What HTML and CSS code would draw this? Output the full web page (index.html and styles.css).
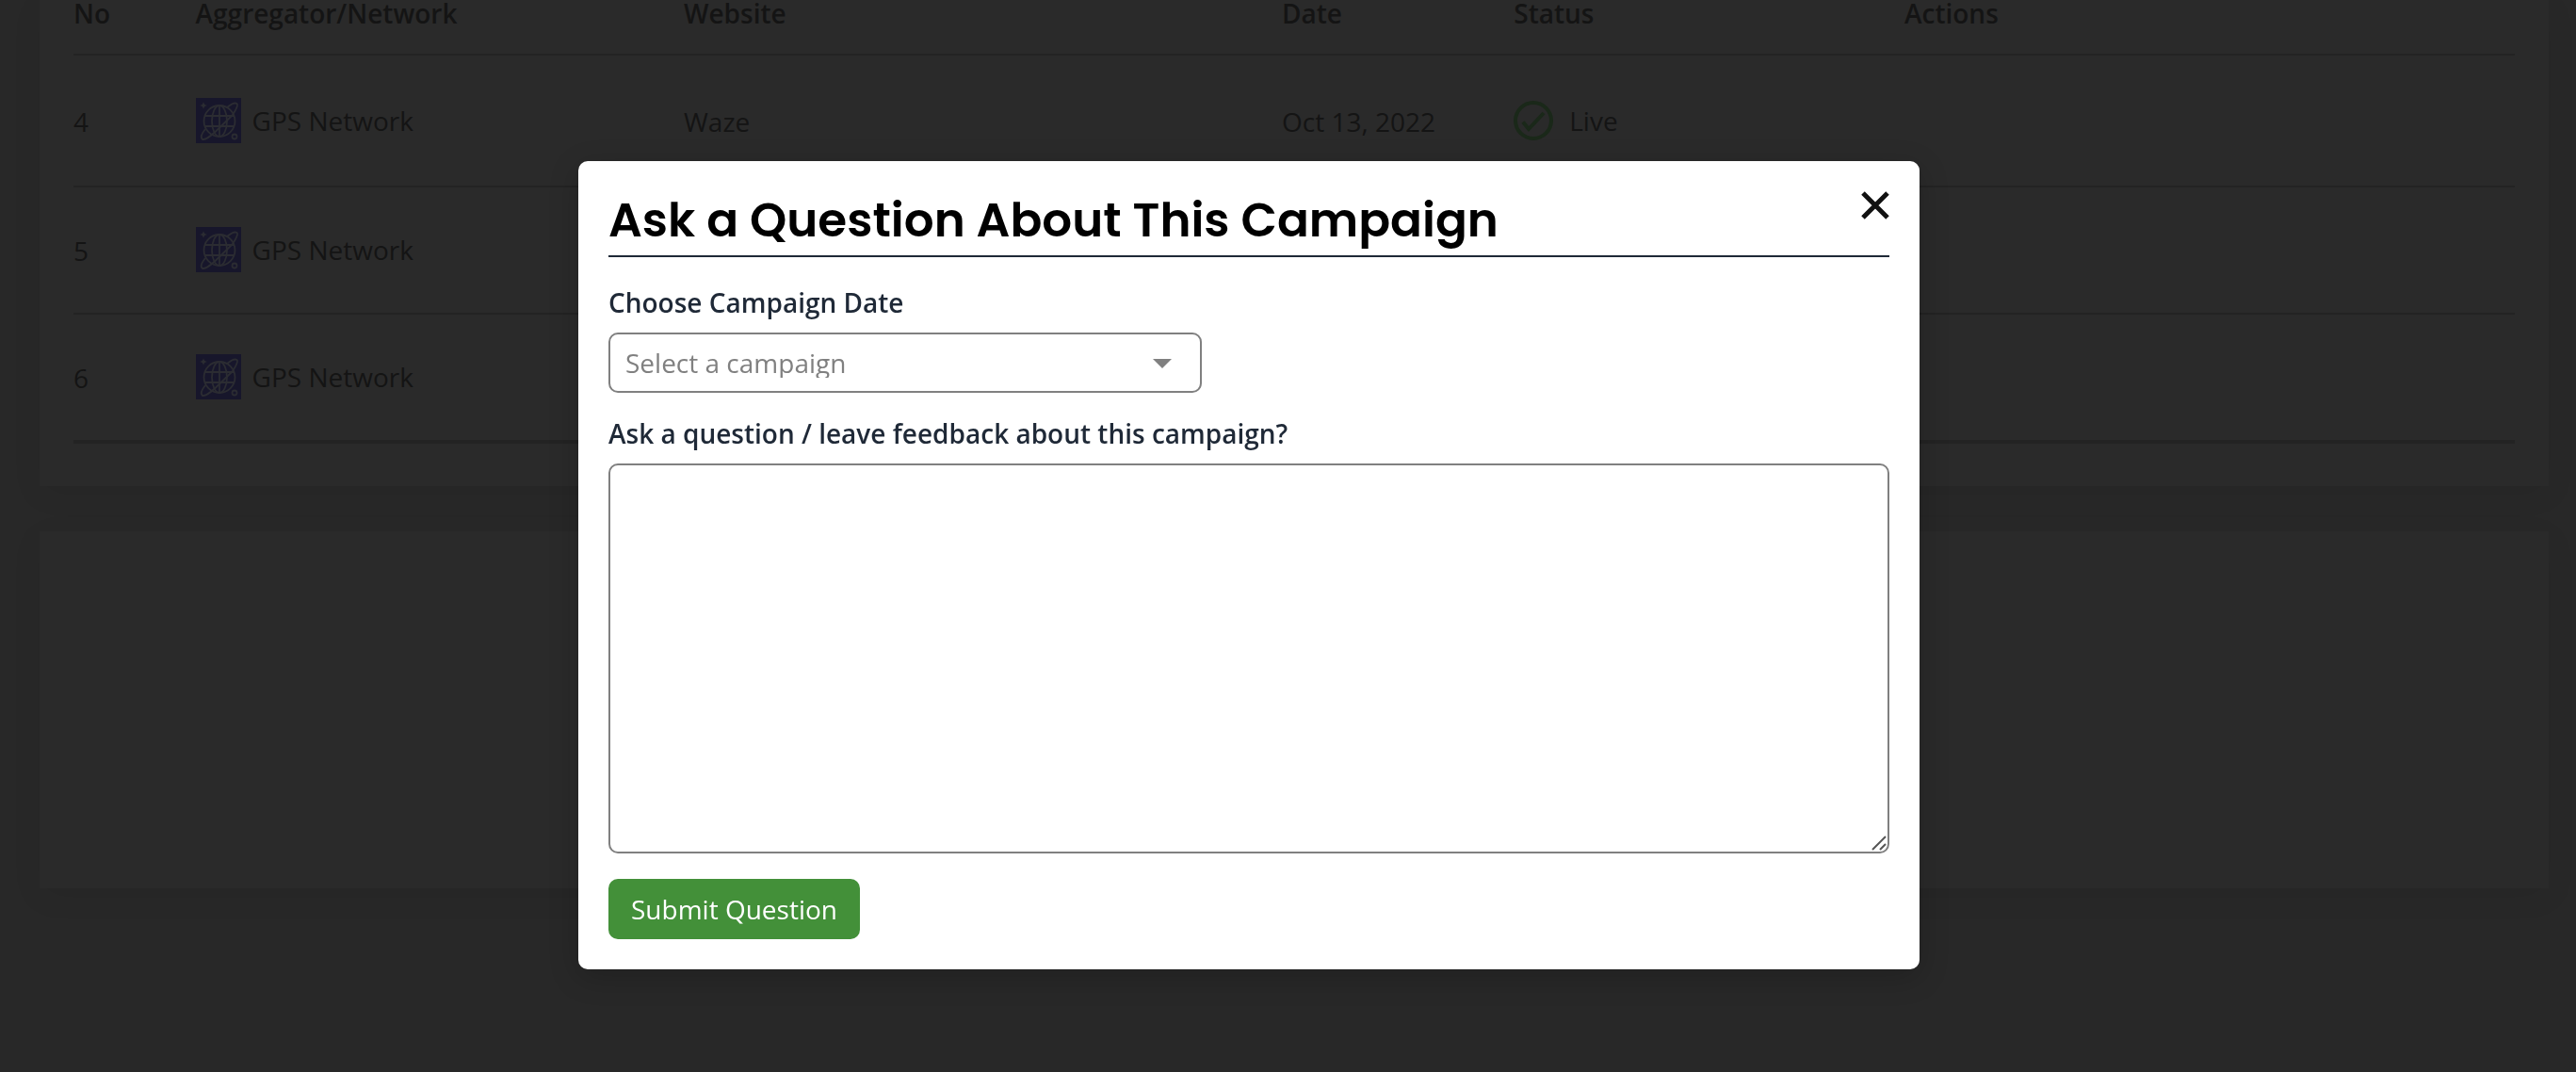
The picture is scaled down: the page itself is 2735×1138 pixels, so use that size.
FILE: index.html
```html
<!DOCTYPE html>
<html lang="en">
<head>
<meta charset="utf-8">
<meta name="viewport" content="width=device-width, initial-scale=1">
<title>Campaign</title>
<link rel="stylesheet" href="styles.css">
</head>
<body>
<svg class="sprite" aria-hidden="true">
  <symbol id="globe" viewBox="0 0 48 48">
    <g fill="none" stroke="currentColor" stroke-width="1.8">
      <circle cx="25" cy="24.500" r="16.500"/>
      <ellipse cx="25" cy="24.500" rx="8" ry="16.500"/>
      <path d="M25 8v33M10 19h30M10 30h30"/>
      <path d="M33 10c5-4 9-5 10.500-4s-.5 6-4 11M10 33c-4 5-5 9-3.500 10.500s7-1 14-7.500L40 17"/>
      <circle cx="41" cy="41" r="2.500"/>
    </g>
    <path fill="currentColor" d="M8 4q.5 3.500 4 4-3.500.5-4 4-.5-3.500-4-4 3.500-.5 4-4z"/>
  </symbol>
</svg>

<main class="page">
  <section class="card">
    <table class="networks">
      <colgroup>
        <col class="col-no"><col class="col-network"><col class="col-website">
        <col class="col-date"><col class="col-status"><col class="col-actions">
      </colgroup>
      <thead>
        <tr><th>No</th><th>Aggregator/Network</th><th>Website</th><th>Date</th><th>Status</th><th>Actions</th></tr>
      </thead>
      <tbody>
        <tr class="filled">
          <td>4</td>
          <td><div class="network"><svg class="logo"><use href="#globe"/></svg>GPS Network</div></td>
          <td>Waze</td>
          <td>Oct 13, 2022</td>
          <td>
            <div class="status">
              <svg class="check" viewBox="0 0 42 42"><circle cx="21" cy="21" r="19"/><path d="M10 22.500l6 7.500L32 13"/></svg>
              Live
            </div>
          </td>
          <td></td>
        </tr>
        <tr>
          <td>5</td>
          <td><div class="network"><svg class="logo"><use href="#globe"/></svg>GPS Network</div></td>
          <td></td><td></td><td></td><td></td>
        </tr>
        <tr>
          <td>6</td>
          <td><div class="network"><svg class="logo"><use href="#globe"/></svg>GPS Network</div></td>
          <td></td><td></td><td></td><td></td>
        </tr>
      </tbody>
    </table>
  </section>
  <section class="card card-empty"></section>
</main>

<div class="overlay">
  <form class="modal" role="dialog" aria-labelledby="modal-title">
    <header class="modal-header">
      <h2 class="modal-title" id="modal-title">Ask a Question About This Campaign</h2>
      <button class="close" type="button" aria-label="Close">
        <svg viewBox="0 0 30 30"><path d="M2 2l26 26M28 2L2 28"/></svg>
      </button>
    </header>
    <div class="field">
      <label for="campaign">Choose Campaign Date</label>
      <div class="select">
        <select id="campaign"><option>Select a campaign</option></select>
        <svg class="caret" viewBox="0 0 20 10"><path d="M0 0h20L10 10z"/></svg>
      </div>
    </div>
    <div class="field">
      <label for="question">Ask a question / leave feedback about this campaign?</label>
      <div class="question">
        <textarea id="question"></textarea>
        <svg class="grip" viewBox="0 0 16 16"><path d="M1 15L15 1M9 15l6-6"/></svg>
      </div>
    </div>
    <button class="submit" type="submit">Submit Question</button>
  </form>
</div>
</body>
</html>
```

FILE: styles.css
```css
*, *::before, *::after { box-sizing: border-box; }

body {
  margin: 0;
  min-height: 100vh;
  background: #282828;
  color: #141414;
  font: 400 28px/40px "Open Sans", "Noto Sans", sans-serif;
}

.sprite { display: none; }

/* Dimmed page behind the dialog */
.page {
  display: flex;
  flex-direction: column;
  gap: 48px;
  padding: 0 29px 0 42px;
}

.card {
  padding: 0 36px 45px;
  background: #2a2a2a;
  box-shadow: 0 8px 32px rgba(0, 0, 0, 0.06);
}

.card-empty { height: 379px; padding: 0; }

.networks {
  width: 100%;
  table-layout: fixed;
  border-spacing: 0;
  border-bottom: 2px solid #232323;
}

.col-no { width: 5%; }
.col-network { width: 20%; }
.col-website { width: 24.5%; }
.col-date { width: 9.5%; }
.col-status { width: 16%; }
.col-actions { width: 25%; }

.networks th {
  padding: 0 0 29px;
  border-bottom: 2px solid #232323;
  font-weight: 600;
  line-height: 28px;
  text-align: left;
}

.networks td {
  height: 135px;
  padding: 0;
  border-bottom: 2px solid #232323;
}

.networks .filled td { height: 140px; padding-top: 2px; }

.network { display: flex; align-items: center; gap: 12px; padding-bottom: 2px; }
.logo { width: 48px; height: 48px; background: #17162b; color: #2b2c32; }

.status { display: flex; align-items: center; gap: 17px; padding-bottom: 2px; }
.check { width: 42px; height: 42px; fill: none; stroke: #1a2819; stroke-width: 4; }

/* Dialog */
.overlay {
  position: fixed;
  inset: 0;
  display: flex;
  align-items: flex-start;
  justify-content: center;
  padding: 171px 83px 0 0;
}

.modal {
  width: 100%;
  max-width: 1424px;
  padding: 32px;
  border-radius: 10px;
  background: #fff;
  box-shadow: 0 8px 32px rgba(0, 0, 0, 0.2);
}

.modal-header {
  display: flex;
  justify-content: space-between;
  align-items: flex-start;
  margin-bottom: 28px;
  border-bottom: 2px solid #1f2937;
}

.modal-title {
  margin: 0;
  padding-bottom: 6px;
  color: #000;
  font: 600 50px/62px Poppins, Inter, sans-serif;
}

.close { display: flex; padding: 0; border: 0; background: none; }
.close svg { width: 30px; height: 30px; fill: none; stroke: #111; stroke-width: 5; }

.field { margin-bottom: 23px; }

.field label {
  display: block;
  margin-bottom: 12px;
  color: #1f2937;
  font-weight: 600;
}

.select { position: relative; max-width: 630px; }

.select select {
  display: block;
  appearance: none;
  width: 100%;
  height: 64px;
  padding: 14px 16px;
  border: 2px solid #808080;
  border-radius: 10px;
  background: #fff;
  color: #808080;
  font: inherit;
  line-height: 32px;
}

.caret {
  position: absolute;
  top: 28px;
  right: 32px;
  width: 20px;
  height: 10px;
  fill: #808080;
  pointer-events: none;
}

.question { position: relative; margin-bottom: 27px; }

.question textarea {
  display: block;
  width: 100%;
  height: 414px;
  padding: 14px 16px;
  border: 2px solid #808080;
  border-radius: 10px;
  background: #fff;
  font: inherit;
  resize: none;
}

.grip {
  position: absolute;
  right: 3px;
  bottom: 3px;
  width: 16px;
  height: 16px;
  fill: none;
  stroke: #555;
  stroke-width: 2;
}

.submit {
  display: block;
  padding: 12px 24px;
  border: 0;
  border-radius: 10px;
  background: #439039;
  color: #fff;
  font: inherit;
}
```
